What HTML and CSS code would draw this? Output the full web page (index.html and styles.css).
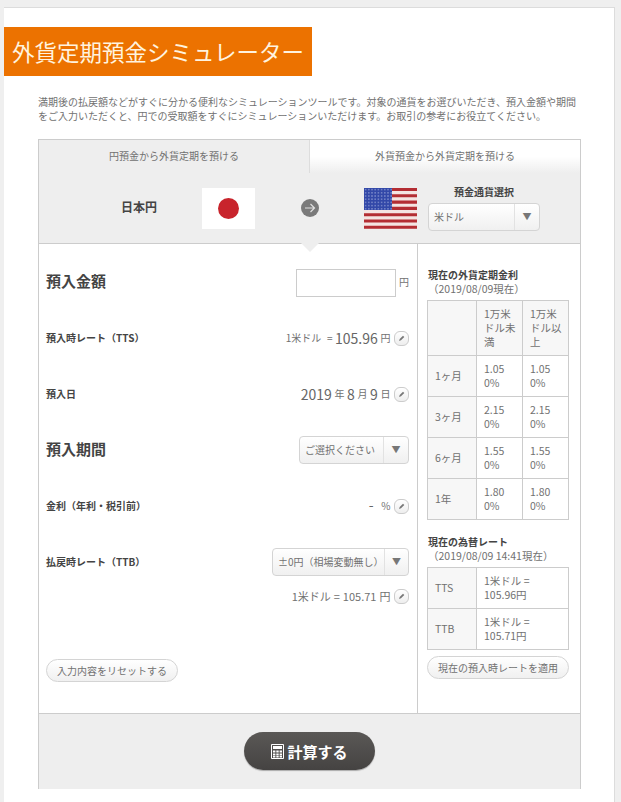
FILE: index.html
```html
<!DOCTYPE html>
<html lang="ja">
<head>
	<meta charset="UTF-8">
	<title>外貨定期預金シミュレーター</title>
	<link rel="stylesheet" href="styles.css">
</head>
<body>
<div class="page">
	<h1 class="title">外貨定期預金シミュレーター</h1>
	<p class="lead">満期後の払戻額などがすぐに分かる便利なシミュレーションツールです。対象の通貨をお選びいただき、預入金額や期間<br>をご入力いただくと、円での受取額をすぐにシミュレーションいただけます。お取引の参考にお役立てください。</p>

	<div class="panel">
		<div class="tabs">
			<div class="tab tabOn">円預金から外貨定期を預ける</div>
			<div class="tab">外貨預金から外貨定期を預ける</div>
		</div>

		<div class="currency">
			<div class="fromName">日本円</div>
			<svg class="flag" viewBox="0 0 53 41">
				<rect width="53" height="41" fill="#fff"/>
				<circle cx="26.5" cy="20.5" r="10.5" fill="#c8242c"/>
			</svg>
			<svg class="go" viewBox="0 0 18 18">
				<circle cx="9" cy="9" r="9" fill="#7a7a7a"/>
				<path d="M4 9h9M9.5 5l4 4-4 4" fill="none" stroke="#e0e0e0" stroke-width="1.2"/>
			</svg>
			<svg class="flag flagUs" viewBox="0 0 53 41">
				<defs>
					<pattern id="stars" width="3.2" height="3.2" patternUnits="userSpaceOnUse">
						<circle cx="1.6" cy="1.6" r=".6" fill="#c9d2f0"/>
					</pattern>
				</defs>
				<rect width="53" height="41" fill="#f4e4e2"/>
				<path d="M0 1.5h53M0 7.8h53M0 14.1h53M0 20.4h53M0 26.7h53M0 33h53M0 39.3h53" stroke="#b32d33" stroke-width="3.1"/>
				<rect width="28" height="22" fill="#3248a8"/>
				<rect width="28" height="22" fill="url(#stars)"/>
			</svg>
			<div class="toCurrency">
				<div class="toLabel">預金通貨選択</div>
				<div class="select selectCur"><span class="selectText">米ドル</span><span class="selectArrow">▼</span></div>
			</div>
		</div>

		<div class="main">
			<div class="left">
				<div class="row">
					<div class="labelBig">預入金額</div>
					<div class="value"><input class="amount" type="text"><span class="unit">円</span></div>
				</div>
				<div class="row">
					<div class="label">預入時レート（TTS）</div>
					<div class="value"><span class="unit">1米ドル =</span><span class="num">105.96</span><span class="unit">円</span><span class="pen"><svg viewBox="0 0 9 9"><path d="M1.2 7.8l.7-2.2 3.7-3.7 1.5 1.5-3.7 3.7z" fill="#777"/></svg></span></div>
				</div>
				<div class="row">
					<div class="label">預入日</div>
					<div class="value"><span class="num">2019</span><span class="unit">年</span><span class="num">8</span><span class="unit">月</span><span class="num">9</span><span class="unit">日</span><span class="pen"><svg viewBox="0 0 9 9"><path d="M1.2 7.8l.7-2.2 3.7-3.7 1.5 1.5-3.7 3.7z" fill="#777"/></svg></span></div>
				</div>
				<div class="row">
					<div class="labelBig">預入期間</div>
					<div class="select selectTerm"><span class="selectText">ご選択ください</span><span class="selectArrow">▼</span></div>
				</div>
				<div class="row">
					<div class="label">金利（年利・税引前）</div>
					<div class="value"><span class="num dash">-</span><span class="unit">%</span><span class="pen"><svg viewBox="0 0 9 9"><path d="M1.2 7.8l.7-2.2 3.7-3.7 1.5 1.5-3.7 3.7z" fill="#777"/></svg></span></div>
				</div>
				<div class="row">
					<div class="label">払戻時レート（TTB）</div>
					<div class="select selectRate"><span class="selectText">±0円（相場変動無し）</span><span class="selectArrow">▼</span></div>
				</div>
				<div class="subRow">
					<div class="value"><span class="subRate">1米ドル = 105.71 円</span><span class="pen"><svg viewBox="0 0 9 9"><path d="M1.2 7.8l.7-2.2 3.7-3.7 1.5 1.5-3.7 3.7z" fill="#777"/></svg></span></div>
				</div>
				<div class="pill reset">入力内容をリセットする</div>
			</div>

			<div class="right">
				<div class="sideHead">現在の外貨定期金利</div>
				<div class="sideDate">（2019/08/09現在）</div>
				<table class="rates">
					<tr class="rowHead"><th></th><th>1万米<br>ドル未<br>満</th><th>1万米<br>ドル以<br>上</th></tr>
					<tr><th>1ヶ月</th><td>1.05<br>0%</td><td>1.05<br>0%</td></tr>
					<tr><th>3ヶ月</th><td>2.15<br>0%</td><td>2.15<br>0%</td></tr>
					<tr><th>6ヶ月</th><td>1.55<br>0%</td><td>1.55<br>0%</td></tr>
					<tr><th>1年</th><td>1.80<br>0%</td><td>1.80<br>0%</td></tr>
				</table>

				<div class="sideHead sideHead2">現在の為替レート</div>
				<div class="sideDate">（2019/08/09 14:41現在）</div>
				<table class="rates">
					<tr><th>TTS</th><td>1米ドル =<br>105.96円</td></tr>
					<tr><th>TTB</th><td>1米ドル =<br>105.71円</td></tr>
				</table>
				<div class="pill apply">現在の預入時レートを適用</div>
			</div>
		</div>

		<div class="foot">
			<div class="calc">
				<svg class="calcIcon" viewBox="0 0 13 15">
					<path d="M.5.5h12v14H.5z" fill="none" stroke="#fff"/>
					<path d="M2 2h9v3H2zM2 6.5h2.4v2H2zM5.3 6.5h2.4v2H5.3zM8.6 6.5H11v2H8.6zM2 9.5h2.4v2H2zM5.3 9.5h2.4v2H5.3zM8.6 9.5H11v2H8.6zM2 12h2.4v1.5H2zM5.3 12h2.4v1.5H5.3zM8.6 12H11v1.5H8.6z" fill="#fff"/>
				</svg>
				計算する
			</div>
		</div>
	</div>
</div>
</body>
</html>
```
FILE: styles.css
```css
*{
	box-sizing:border-box;
}
html,body{
	height:100%;
	overflow:hidden;
}
body{
	margin:0;
	background:#efefef;
	color:#717171;
	font-family:"Noto Sans CJK JP","Liberation Sans",sans-serif;
	font-size:10px;
}

.page{
	width:611px;
	height:795px;
	margin:7px 0 0 4px;
	padding-top:19px;
	background:#fff;
	border:1px solid #dcdcdc;
	border-left:0;
	border-bottom:0;
}
.title{
	width:308px;
	height:49px;
	margin:0;
	padding-left:8px;
	background:#ec7200;
	color:#fff3df;
	font-size:22.5px;
	font-weight:400;
	line-height:49px;
	white-space:nowrap;
}
.lead{
	margin:19px 0 0 34px;
	line-height:14px;
	white-space:nowrap;
}

/* panel */
.panel{
	width:543px;
	margin:16px 0 0 34px;
	border:1px solid #ccc;
	border-bottom:0;
}
.tabs{
	display:flex;
	height:33px;
}
.tab{
	flex:1;
	text-align:center;
	line-height:32px;
	background:linear-gradient(#fff 50%,#eee);
}
.tabOn{
	flex:none;
	width:271px;
	background:#eee;
	border-right:1px solid #ddd;
}
.currency{
	display:flex;
	align-items:flex-start;
	height:71px;
	padding-top:15px;
	background:#eee;
	border-bottom:1px solid #ccc;
	position:relative;
}
.currency:after{
	content:"";
	position:absolute;
	left:262px;
	bottom:-9px;
	border:9px solid transparent;
	border-bottom:0;
	border-top-color:#eee;
}
.fromName{
	width:163px;
	padding-right:45px;
	text-align:right;
	color:#444;
	font-size:12px;
	font-weight:700;
	line-height:38px;
}
.flag{
	width:53px;
	height:41px;
	flex:none;
}
.go{
	width:18px;
	height:18px;
	margin:11px 45px 0 46px;
	flex:none;
}
.toCurrency{
	width:112px;
	margin:-2px 0 0 11px;
}
.toLabel{
	text-align:center;
	color:#444;
	font-weight:700;
	line-height:12px;
	margin-bottom:5px;
}

/* select */
.select{
	display:flex;
	height:28px;
	border:1px solid #d4d4d4;
	border-radius:4px;
	background:linear-gradient(#fff,#f0f0f0);
	line-height:26px;
	white-space:nowrap;
}
.selectText{
	flex:1;
	padding-left:5px;
}
.selectArrow{
	width:25px;
	flex:none;
	border-left:1px solid #e2e2e2;
	text-align:center;
	font-size:9px;
	color:#777;
}
.selectCur{
	width:112px;
}
.selectTerm{
	width:110px;
}
.selectRate{
	width:137px;
}

/* main */
.main{
	display:flex;
	height:469px;
}
.left{
	width:379px;
	padding:10px 8px 0 7px;
	border-right:1px solid #ccc;
}
.row{
	display:flex;
	justify-content:space-between;
	align-items:center;
	height:56px;
}
.label{
	color:#444;
	font-weight:700;
	line-height:14px;
}
.labelBig{
	color:#444;
	font-size:15px;
	font-weight:700;
	line-height:20px;
	margin-bottom:3px;
}
.value{
	display:flex;
	align-items:center;
	gap:2.6px;
	white-space:nowrap;
}
.amount{
	width:100px;
	height:28px;
	margin:2px 0 0 0;
	border:1px solid #ccc;
	background:#fff;
}
.unit{
	line-height:16px;
	word-spacing:3.5px;
}
.num{
	font-size:14px;
	line-height:16px;
	color:#666;
}
.dash{
	margin:0 5px 4px 0;
}
.pen{
	display:flex;
	align-items:center;
	justify-content:center;
	width:15px;
	height:15px;
	margin-left:1px;
	border:1px solid #ccc;
	border-radius:6px;
	background:linear-gradient(#fff,#eee);
}
.pen svg{
	width:8px;
	height:8px;
}
.subRow{
	display:flex;
	justify-content:flex-end;
	height:16px;
	margin-top:-2px;
}
.subRate{
	font-size:11px;
	line-height:16px;
	word-spacing:.5px;
}
.pill{
	height:23px;
	border:1px solid #d4d4d4;
	border-radius:12px;
	background:linear-gradient(#fff,#f0f0f0);
	text-align:center;
	line-height:21px;
	white-space:nowrap;
}
.reset{
	width:132px;
	margin-top:55px;
}

/* right column */
.right{
	flex:1;
	padding:24px 0 0 9px;
}
.sideHead{
	padding-left:1px;
	color:#444;
	font-weight:700;
	line-height:14px;
}
.sideHead2{
	margin-top:15px;
}
.sideDate{
	padding-left:1px;
	font-size:10.5px;
	line-height:14px;
	margin-bottom:4px;
	white-space:nowrap;
}
.rates{
	width:142px;
	border-collapse:collapse;
	table-layout:fixed;
	font-size:10.5px;
	line-height:14px;
}
.rates th,.rates td{
	height:41px;
	padding:0 7px;
	border:1px solid #ccc;
	text-align:left;
	font-weight:400;
	white-space:nowrap;
}
.rates th{
	width:49px;
	background:#f7f7f7;
}
.rates .rowHead th{
	height:55px;
}
.rates .rowHead th+th{
	width:auto;
}
.apply{
	width:142px;
	margin-top:6px;
}

/* footer */
.foot{
	display:flex;
	justify-content:center;
	height:76px;
	padding-top:18px;
	background:#eee;
	border-top:1px solid #ccc;
}
.calc{
	display:flex;
	align-items:center;
	justify-content:center;
	gap:3px;
	width:131px;
	height:38px;
	border-radius:19px;
	background:linear-gradient(#5a5856,#454342);
	box-shadow:0 1px 1px #aaa;
	color:#fff;
	font-size:15px;
	font-weight:700;
}
.calcIcon{
	width:13px;
	height:15px;
}
```
